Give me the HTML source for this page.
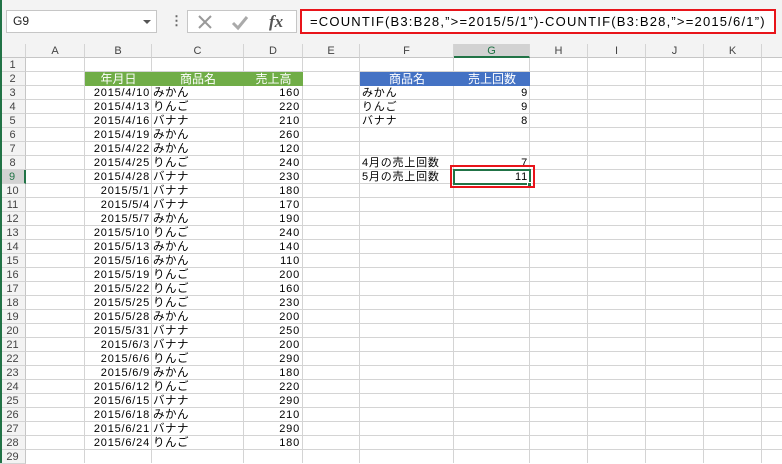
<!DOCTYPE html><html><head><meta charset="utf-8"><style>
*{margin:0;padding:0;box-sizing:border-box}
body{width:782px;height:463px;overflow:hidden;background:#fff;position:relative;font-family:"Liberation Sans","Noto Sans CJK JP",sans-serif;font-size:11px;color:#000}
.a{position:absolute}
.top{left:0;top:0;width:782px;height:44px;background:#f3f3f3}
.vl{position:absolute;top:44px;width:1px;height:419px;background:#d4d4d4}
.ch{position:absolute;top:44px;height:14px;text-align:center;font-size:11px;color:#444;line-height:14px;border-right:1px solid #d4d4d4;border-bottom:1px solid #c6c6c6;background:#f3f3f3}
.rh{position:absolute;left:0;width:26px;height:14px;text-align:center;font-size:11px;color:#444;line-height:14px;background:#f3f3f3;border-bottom:1px solid #d4d4d4;border-right:1px solid #c6c6c6}
.r{position:absolute;left:0;height:14px;line-height:14px;width:782px;letter-spacing:0.8px}
.r span{position:absolute;top:0;white-space:nowrap}
.b{right:calc(782px - 150px)}
.c{left:153px;font-size:11.5px;letter-spacing:0.5px}
.d{right:calc(782px - 300px)}
</style></head><body>
<div class="a top"></div>
<div class="a" style="left:6px;top:10px;width:151px;height:23px;background:#fff;border:1px solid #c6c6c6;font-size:12px;line-height:21px;padding-left:6px;color:#222">G9<span class="a" style="right:5px;top:9px;width:0;height:0;border-left:4px solid transparent;border-right:4px solid transparent;border-top:4px solid #555"></span></div>
<div class="a" style="left:170px;top:14px;color:#666;font-size:13px;line-height:13px;font-weight:bold">⋮</div>
<div class="a" style="left:187px;top:10px;width:110px;height:23px;background:#fff;border:1px solid #c6c6c6"></div>
<svg class="a" style="left:195px;top:13px" width="100" height="18"><path d="M4 3l12 12M16 3L4 15" stroke="#999" stroke-width="2" fill="none"/><path d="M38 10l5 5 9-11" stroke="#aaa" stroke-width="3" fill="none"/><text x="74" y="14" font-family="Liberation Serif,serif" font-style="italic" font-weight="bold" font-size="17" fill="#555">fx</text></svg>
<div class="a" style="left:300px;top:9px;width:476px;height:25px;background:#fff;border:2px solid #e8141a;font-size:13px;line-height:21px;padding-left:8px;letter-spacing:1.2px;white-space:nowrap;overflow:hidden">=COUNTIF(B3:B28,”&gt;=2015/5/1”)-COUNTIF(B3:B28,”&gt;=2015/6/1”)</div>
<div class="a" style="left:26px;top:58px;width:756px;height:405px;background:repeating-linear-gradient(to bottom,transparent 0 13px,#d4d4d4 13px 14px)"></div>
<div class="vl" style="left:84px"></div><div class="vl" style="left:151px"></div><div class="vl" style="left:243px"></div><div class="vl" style="left:302px"></div><div class="vl" style="left:359px"></div><div class="vl" style="left:453px"></div><div class="vl" style="left:529px"></div><div class="vl" style="left:587px"></div><div class="vl" style="left:645px"></div><div class="vl" style="left:703px"></div><div class="vl" style="left:761px"></div>
<div class="ch" style="left:0;width:26px"></div>
<div class="ch" style="left:26px;width:59px">A</div><div class="ch" style="left:85px;width:67px">B</div><div class="ch" style="left:152px;width:92px">C</div><div class="ch" style="left:244px;width:59px">D</div><div class="ch" style="left:303px;width:57px">E</div><div class="ch" style="left:360px;width:94px">F</div><div class="ch" style="left:454px;width:76px;background:#d2d2d2;border-bottom:2px solid #217346;color:#217346">G</div><div class="ch" style="left:530px;width:58px">H</div><div class="ch" style="left:588px;width:58px">I</div><div class="ch" style="left:646px;width:58px">J</div><div class="ch" style="left:704px;width:58px">K</div><div class="ch" style="left:762px;width:30px"></div>
<div class="a" style="left:0;top:58px">
<div class="rh" style="top:0">1</div><div class="rh" style="top:14px">2</div><div class="rh" style="top:28px">3</div><div class="rh" style="top:42px">4</div><div class="rh" style="top:56px">5</div><div class="rh" style="top:70px">6</div><div class="rh" style="top:84px">7</div><div class="rh" style="top:98px">8</div><div class="rh" style="top:112px;background:#d2d2d2;border-right:2px solid #217346;color:#217346">9</div><div class="rh" style="top:126px">10</div><div class="rh" style="top:140px">11</div><div class="rh" style="top:154px">12</div><div class="rh" style="top:168px">13</div><div class="rh" style="top:182px">14</div><div class="rh" style="top:196px">15</div><div class="rh" style="top:210px">16</div><div class="rh" style="top:224px">17</div><div class="rh" style="top:238px">18</div><div class="rh" style="top:252px">19</div><div class="rh" style="top:266px">20</div><div class="rh" style="top:280px">21</div><div class="rh" style="top:294px">22</div><div class="rh" style="top:308px">23</div><div class="rh" style="top:322px">24</div><div class="rh" style="top:336px">25</div><div class="rh" style="top:350px">26</div><div class="rh" style="top:364px">27</div><div class="rh" style="top:378px">28</div><div class="rh" style="top:392px">29</div>
</div>
<div class="a" style="left:0;top:0;width:2px;height:463px;background:#217346;z-index:5"></div>
<div class="a" style="left:85px;top:72px;width:218px;height:14px;background:#70ad47;color:#fff;font-size:12px;line-height:14px">
<span class="a" style="left:0;width:67px;text-align:center">年月日</span><span class="a" style="left:67px;width:92px;text-align:center">商品名</span><span class="a" style="left:159px;width:59px;text-align:center">売上高</span></div>
<div class="a" style="left:360px;top:72px;width:170px;height:14px;background:#4472c4;color:#fff;font-size:12px;line-height:14px">
<span class="a" style="left:0;width:94px;text-align:center">商品名</span><span class="a" style="left:94px;width:76px;text-align:center">売上回数</span></div>
<div class="a" style="left:0;top:86px">
<div class="r" style="top:0"><span class="b">2015/4/10</span><span class="c">みかん</span><span class="d">160</span><span style="left:362px">みかん</span><span style="right:254px">9</span></div>
<div class="r" style="top:14px"><span class="b">2015/4/13</span><span class="c">りんご</span><span class="d">220</span><span style="left:362px">りんご</span><span style="right:254px">9</span></div>
<div class="r" style="top:28px"><span class="b">2015/4/16</span><span class="c">バナナ</span><span class="d">210</span><span style="left:362px">バナナ</span><span style="right:254px">8</span></div>
<div class="r" style="top:42px"><span class="b">2015/4/19</span><span class="c">みかん</span><span class="d">260</span></div>
<div class="r" style="top:56px"><span class="b">2015/4/22</span><span class="c">みかん</span><span class="d">120</span></div>
<div class="r" style="top:70px"><span class="b">2015/4/25</span><span class="c">りんご</span><span class="d">240</span><span style="left:362px">4月の売上回数</span><span style="right:254px">7</span></div>
<div class="r" style="top:84px"><span class="b">2015/4/28</span><span class="c">バナナ</span><span class="d">230</span><span style="left:362px">5月の売上回数</span><span style="right:254px">11</span></div>
<div class="r" style="top:98px"><span class="b">2015/5/1</span><span class="c">バナナ</span><span class="d">180</span></div>
<div class="r" style="top:112px"><span class="b">2015/5/4</span><span class="c">バナナ</span><span class="d">170</span></div>
<div class="r" style="top:126px"><span class="b">2015/5/7</span><span class="c">みかん</span><span class="d">190</span></div>
<div class="r" style="top:140px"><span class="b">2015/5/10</span><span class="c">りんご</span><span class="d">240</span></div>
<div class="r" style="top:154px"><span class="b">2015/5/13</span><span class="c">みかん</span><span class="d">140</span></div>
<div class="r" style="top:168px"><span class="b">2015/5/16</span><span class="c">みかん</span><span class="d">110</span></div>
<div class="r" style="top:182px"><span class="b">2015/5/19</span><span class="c">りんご</span><span class="d">200</span></div>
<div class="r" style="top:196px"><span class="b">2015/5/22</span><span class="c">りんご</span><span class="d">160</span></div>
<div class="r" style="top:210px"><span class="b">2015/5/25</span><span class="c">りんご</span><span class="d">230</span></div>
<div class="r" style="top:224px"><span class="b">2015/5/28</span><span class="c">みかん</span><span class="d">200</span></div>
<div class="r" style="top:238px"><span class="b">2015/5/31</span><span class="c">バナナ</span><span class="d">250</span></div>
<div class="r" style="top:252px"><span class="b">2015/6/3</span><span class="c">バナナ</span><span class="d">200</span></div>
<div class="r" style="top:266px"><span class="b">2015/6/6</span><span class="c">りんご</span><span class="d">290</span></div>
<div class="r" style="top:280px"><span class="b">2015/6/9</span><span class="c">みかん</span><span class="d">180</span></div>
<div class="r" style="top:294px"><span class="b">2015/6/12</span><span class="c">りんご</span><span class="d">220</span></div>
<div class="r" style="top:308px"><span class="b">2015/6/15</span><span class="c">バナナ</span><span class="d">290</span></div>
<div class="r" style="top:322px"><span class="b">2015/6/18</span><span class="c">みかん</span><span class="d">210</span></div>
<div class="r" style="top:336px"><span class="b">2015/6/21</span><span class="c">バナナ</span><span class="d">290</span></div>
<div class="r" style="top:350px"><span class="b">2015/6/24</span><span class="c">りんご</span><span class="d">180</span></div>
</div>
<div class="a" style="left:453px;top:169px;width:78px;height:16px;border:2px solid #217346"></div>
<div class="a" style="left:527px;top:182px;width:5px;height:5px;background:#217346;border:1px solid #fff"></div>
<div class="a" style="left:450px;top:165px;width:85px;height:23px;border:2px solid #e8141a"></div>
</body></html>
